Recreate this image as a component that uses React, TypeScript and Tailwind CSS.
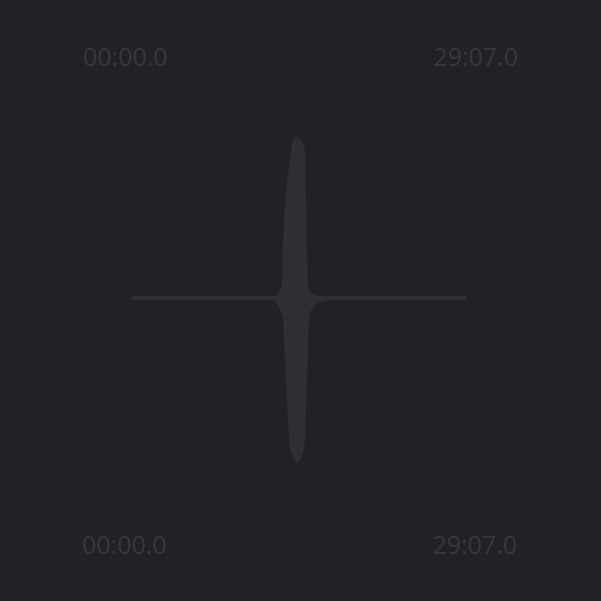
export default function App() {
  return (
    <div
      className="w-[601px] h-[601px] bg-[#212226] flex flex-col overflow-hidden"
      style={{ fontFamily: '"Open Sans", "Noto Sans", sans-serif' }}
    >
      <div className="flex justify-between pl-[83px] pr-[83px] pt-[40px] text-[25px] leading-[32px] text-[#36373c]">
        <span>00:00.0</span>
        <span>29:07.0</span>
      </div>

      {/* waveform */}
      <div className="flex-1 flex items-center justify-center">
        <svg width="340" height="340" viewBox="131 130 340 340" className="block">
          <rect x="131" y="296" width="336" height="4" rx="2" fill="#2e2f34" />
          <path
            fill="#2e2f34"
            d="M296,137 C301,137 305,144 305,152 L306,200 L307,250 L308,288 C310,292 314,294 318,296 L334,299 L320,302 C314,305 310,310 309,318 L307,380 L305,440 C304,452 301,462 297,463 C293,462 291,452 289,440 L286,380 L283,320 C282,312 279,304 273,299 C279,294 282,288 282,282 L283,240 L286,190 L290,160 C291,145 293,137 296,137 Z"
          />
        </svg>
      </div>

      <div className="flex justify-between pl-[82px] pr-[84px] pb-[41px] text-[25px] leading-[32px] text-[#36373c]">
        <span>00:00.0</span>
        <span>29:07.0</span>
      </div>
    </div>
  );
}
